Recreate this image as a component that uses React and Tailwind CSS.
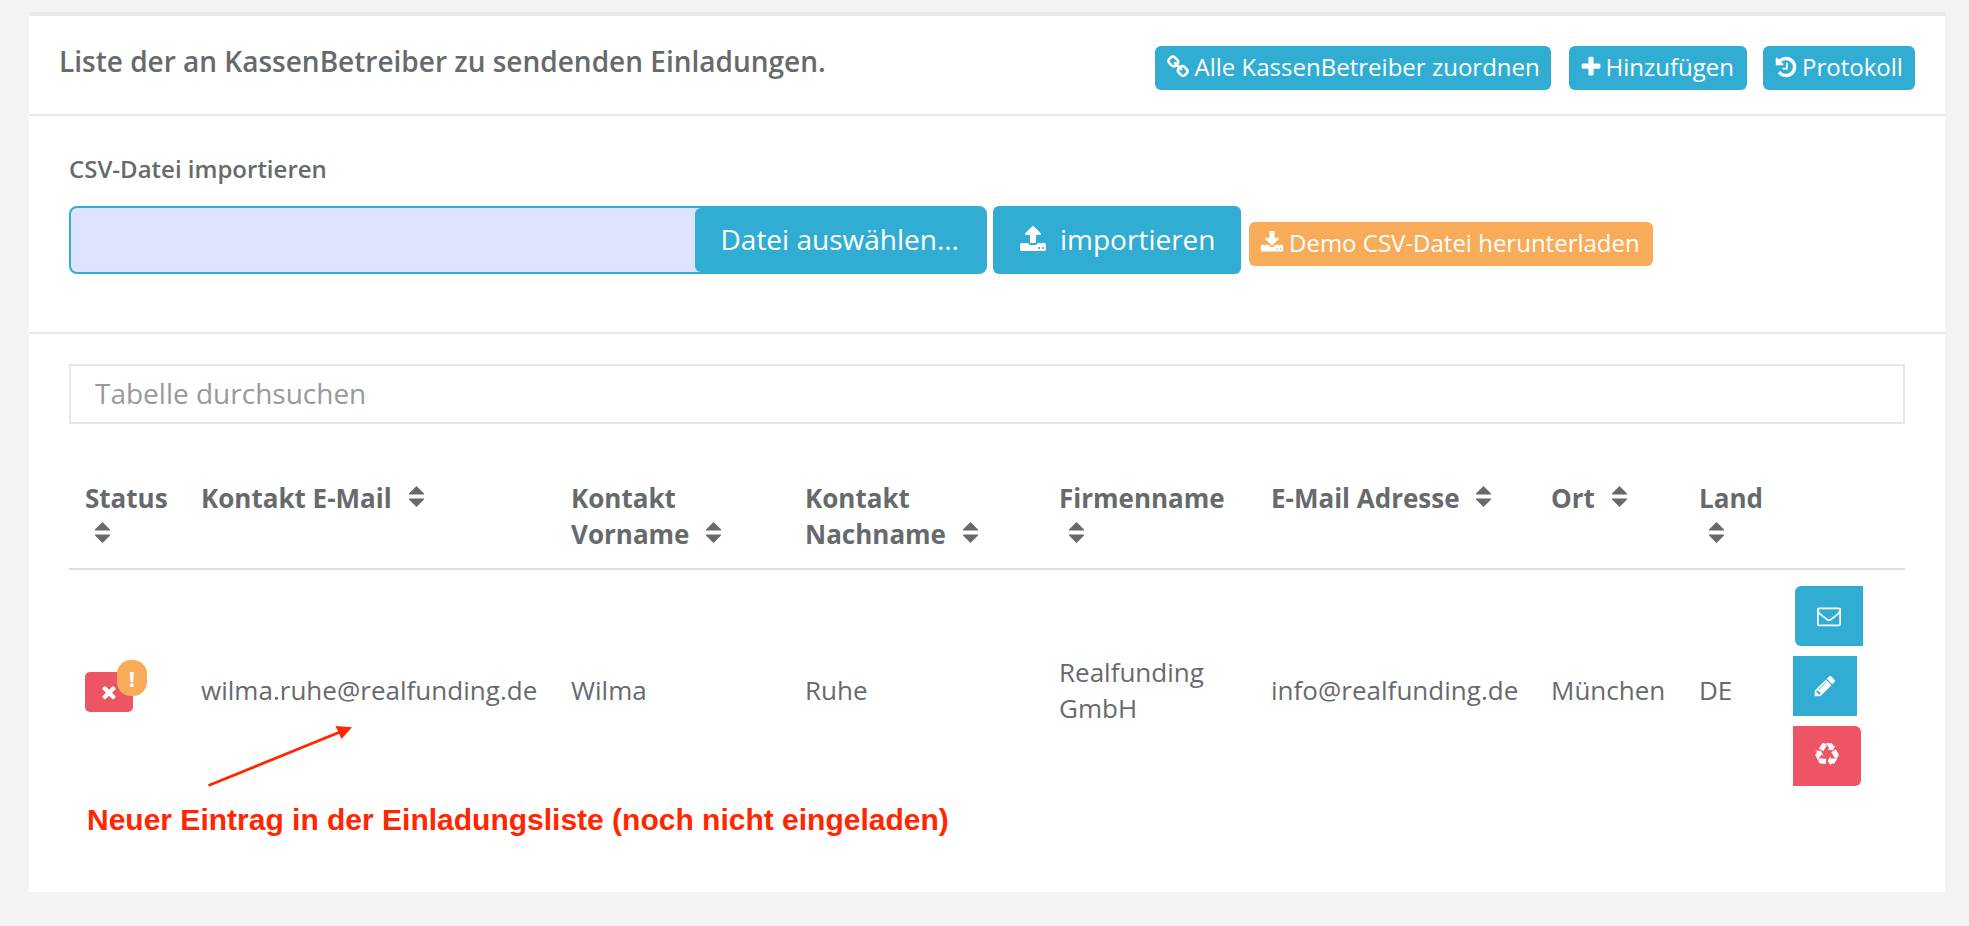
const PATHS = {
  link: "M1520 1216q0-40-28-68l-208-208q-28-28-68-28-42 0-72 32 3 3 19 18.5t21.5 21.5 15 19 13 25.5 3.5 27.5q0 40-28 68t-68 28q-15 0-27.5-3.5t-25.5-13-19-15-21.5-21.5-18.5-19q-33 31-33 73 0 40 28 68l206 207q27 27 68 27 40 0 68-26l147-146q28-28 28-67zm-703-705q0-40-28-68l-206-207q-28-28-68-28-39 0-68 27l-147 146q-28 28-28 67 0 40 28 68l208 208q27 27 68 27 42 0 72-31-3-3-19-18.5t-21.5-21.5-15-19-13-25.5-3.5-27.5q0-40 28-68t68-28q15 0 27.5 3.5t25.5 13 19 15 21.5 21.5 18.5 19q33-31 33-73zm895 705q0 120-85 203l-147 146q-83 83-203 83-121 0-204-85l-206-207q-83-83-83-203 0-123 88-209l-88-88q-86 88-208 88-120 0-204-84l-208-208q-84-84-84-204t85-203l147-146q83-83 203-83 121 0 204 85l206 207q83 83 83 203 0 123-88 209l88 88q86-88 208-88 120 0 204 84l208 208q84 84 84 204z",
  plus: "M1600 736v192q0 40-28 68t-68 28h-416v416q0 40-28 68t-68 28h-192q-40 0-68-28t-28-68v-416h-416q-40 0-68-28t-28-68v-192q0-40 28-68t68-28h416v-416q0-40 28-68t68-28h192q40 0 68 28t28 68v416h416q40 0 68 28t28 68z",
  history: "M1664 896q0 156-61 298t-164 245-245 164-298 61q-172 0-327-72.5t-264-204.5q-7-10-6.5-22.5t8.5-20.5l137-138q10-9 25-9 16 2 23 12 73 95 179 147t225 52q104 0 198.5-40.5t163.5-109.5 109.5-163.5 40.5-198.5-40.5-198.5-109.5-163.5-163.5-109.5-198.5-40.5q-98 0-188 35.5t-160 101.5l137 138q31 30 14 69-17 40-59 40h-448q-26 0-45-19t-19-45v-448q0-42 40-59 39-17 69 14l130 129q107-101 244.5-156.5t284.5-55.5q156 0 298 61t245 164 164 245 61 298zm-640-288v448q0 14-9 23t-23 9h-320q-14 0-23-9t-9-23v-64q0-14 9-23t23-9h224v-352q0-14 9-23t23-9h64q14 0 23 9t9 23z",
  upload: "M1344 1472q0-26-19-45t-45-19-45 19-19 45 19 45 45 19 45-19 19-45zm256 0q0-26-19-45t-45-19-45 19-19 45 19 45 45 19 45-19 19-45zm128-224v320q0 40-28 68t-68 28h-1472q-40 0-68-28t-28-68v-320q0-40 28-68t68-28h427q21 56 70.5 92t110.5 36h256q61 0 110.5-36t70.5-92h427q40 0 68 28t28 68zm-325-648q-17 40-59 40h-256v448q0 26-19 45t-45 19h-256q-26 0-45-19t-19-45v-448h-256q-42 0-59-40-17-39 14-69l448-448q18-19 45-19t45 19l448 448q31 30 14 69z",
  download: "M1344 1344q0-26-19-45t-45-19-45 19-19 45 19 45 45 19 45-19 19-45zm256 0q0-26-19-45t-45-19-45 19-19 45 19 45 45 19 45-19 19-45zm128-224v320q0 40-28 68t-68 28h-1472q-40 0-68-28t-28-68v-320q0-40 28-68t68-28h465l135 136q58 56 136 56t136-56l136-136h464q40 0 68 28t28 68zm-325-569q17 41-14 70l-448 448q-18 19-45 19t-45-19l-448-448q-31-29-14-70 17-39 59-39h256v-448q0-26 19-45t45-19h256q26 0 45 19t19 45v448h256q42 0 59 39z",
  times: "M1490 1322q0 40-28 68l-136 136q-28 28-68 28t-68-28l-294-294-294 294q-28 28-68 28t-68-28l-136-136q-28-28-28-68t28-68l294-294-294-294q-28-28-28-68t28-68l136-136q28-28 68-28t68 28l294 294 294-294q28-28 68-28t68 28l136 136q28 28 28 68t-28 68l-294 294 294 294q28 28 28 68z",
  envelope: "M1664 1504v-768q-32 36-69 66-268 206-426 338-51 43-83 67t-86.5 48.5-102.5 24.5h-2q-48 0-102.5-24.5t-86.5-48.5-83-67q-158-132-426-338-37-30-69-66v768q0 13 9.5 22.5t22.5 9.5h1472q13 0 22.5-9.5t9.5-22.5zm0-1051v-24.5l-.5-13-3-12.5-5.5-9-9-7.5-14-2.5h-1472q-13 0-22.5 9.5t-9.5 22.5q0 168 147 284 193 152 401 317 6 5 35 29.5t46 37.5 44.5 31.5 50.5 27.5 43 9h2q20 0 43-9t50.5-27.5 44.5-31.5 46-37.5 35-29.5q208-165 401-317 54-43 100.5-115.5t46.5-131.5zm128-37v1088q0 66-47 113t-113 47h-1472q-66 0-113-47t-47-113v-1088q0-66 47-113t113-47h1472q66 0 113 47t47 113z",
  pencil: "M491 1536l91-91-235-235-91 91v107h128v128h107zm523-928q0-22-22-22-10 0-17 7l-542 542q-7 7-7 17 0 22 22 22 10 0 17-7l542-542q7-7 7-17zm-54-192l416 416-832 832h-416v-416zm683 96q0 53-37 90l-166 166-416-416 166-165q36-38 90-38 53 0 91 38l235 234q37 39 37 91z",
  recycle: "M836 1169l-15 368-2 22-420-29q-36-3-67-31.5t-47-65.5q-11-27-14.5-55t4-65 12-55 21.5-64 19-53q78 12 509 28zm-387-586l180 379-147-92q-63 72-111.5 144.5t-72.5 125-39.5 94.5-18.5 63l-4 21-190-357q-17-26-18-56t6-47l8-18q35-63 114-188l-140-86zm1231 517l-188 359q-12 29-36.5 46.5t-43.5 20.5l-18 4q-71 7-219 12l8 164-230-367 211-362 7 173q170 16 283 5t170-33zm-785-924q-47 63-265 435l-317-187-19-12 225-356q20-31 60-45t80-10q24 2 48.5 12t42 21 41.5 33 36 34.5 36 39.5 32 35zm655 307l212 363q18 37 12.5 76t-27.5 74q-13 20-33 37t-38 28-48.5 22-47 16-51.5 14-46 12q-34-72-265-436l313-195zm-143-226l142-83-220 373-419-20 151-86q-34-89-75-166t-75.5-123.5-64.5-80-47-46.5l-17-13 405 1q31-3 58 10.5t39 28.5l11 15q39 61 112 190z",
};

function Icon({ name, className = "size-6" }) {
  return (
    <svg viewBox="0 0 1792 1792" fill="currentColor" aria-hidden="true" className={`shrink-0 overflow-visible ${className}`}>
      <path d={PATHS[name]} />
    </svg>
  );
}

function Sorter({ className }) {
  return (
    <svg viewBox="0 0 15 21" fill="currentColor" aria-hidden="true" className={`inline-block h-[21px] w-[15px] align-[1px] ${className}`}>
      <path d="M7.5 0 15 7.5V8.6H0V7.5zM0 12.4H15V13.5L7.5 21 0 13.5z" />
    </svg>
  );
}

function SmallButton({ icon, className, children }) {
  return (
    <button className={`flex h-11 items-center rounded-md pb-[2px] text-2xl leading-none whitespace-nowrap text-white ${className}`}>
      <Icon name={icon} />
      {children}
    </button>
  );
}

const COLS = "grid grid-cols-[116px_370px_234px_254px_212px_280px_148px_95px_127px]";

export default function App() {
  return (
    <div className="h-[926px] w-[1969px] overflow-hidden bg-[#f3f3f3] pt-3 pl-[29px] font-['Open_Sans',sans-serif] text-[#676a6c]">
      <div className="relative h-[880px] w-[1916px] border-t-4 border-[#e7eaec] bg-white">
        <header className="flex h-[100px] items-start justify-between border-b-2 border-[#e7eaec] pr-[30px] pl-[30px]">
          <h5 className="mt-[26px] text-[28px] leading-[38px] font-semibold whitespace-nowrap">
            Liste der an KassenBetreiber zu sendenden Einladungen.
          </h5>
          <div className="mt-[30px] flex">
            <SmallButton icon="link" className="w-[396px] gap-[5px] bg-[#31add3] pl-[10.5px] tracking-[0.01px]">Alle KassenBetreiber zuordnen</SmallButton>
            <SmallButton icon="plus" className="ml-[18px] w-[178px] gap-[3px] bg-[#31add3] pl-[9.5px]">Hinzufügen</SmallButton>
            <SmallButton icon="history" className="ml-4 w-[152px] gap-[4.5px] bg-[#31add3] pl-[10.5px]">Protokoll</SmallButton>
          </div>
        </header>

        <section className="h-[218px] border-b-2 border-[#e7eaec] px-10 pt-[37px]">
          <label className="block h-[53px] text-2xl leading-8 font-semibold">CSV-Datei importieren</label>
          <div className="flex">
            <div className="flex h-[68px] w-[918px] justify-end rounded-lg border-2 border-[#31add3] bg-[#dde4fe]">
              <button className="-mr-px h-16 w-[291px] rounded-md bg-[#31add3] pb-[2px] pl-[25.5px] text-left text-[28px] whitespace-nowrap text-white">
                Datei auswählen...
              </button>
            </div>
            <button className="ml-[6px] flex h-[68px] w-[248px] items-center gap-[13px] rounded-md bg-[#31add3] pb-[2px] pl-[26px] text-[28px] whitespace-nowrap text-white">
              <Icon name="upload" className="size-7" />
              importieren
            </button>
            <SmallButton icon="download" className="mt-4 ml-2 w-[404px] gap-[5px] bg-[#f8ac59] pl-[11px]">Demo CSV-Datei herunterladen</SmallButton>
          </div>
        </section>

        <section className="px-10 pt-[30px]">
          <input
            className="block h-[60px] w-full border-2 border-[#e5e6e7] px-6 pb-[2px] text-[28px] outline-none placeholder:text-[#999]"
            placeholder="Tabelle durchsuchen"
          />
          <div className="mt-[39px] text-[26px] leading-9">
            <div className={`${COLS} h-[107px] border-b-2 border-[#ddd] pt-[17px] font-bold whitespace-nowrap *:pl-4`}>
              <div>Status<br /><Sorter className="ml-[10px]" /></div>
              <div>Kontakt E-Mail<Sorter className="ml-[17px]" /></div>
              <div>Kontakt<br />Vorname<Sorter className="ml-4" /></div>
              <div>Kontakt<br />Nachname<Sorter className="ml-[17px]" /></div>
              <div>Firmenname<br /><Sorter className="ml-[10px]" /></div>
              <div>E-Mail Adresse<Sorter className="ml-4" /></div>
              <div>Ort<Sorter className="ml-[17px]" /></div>
              <div>Land<br /><Sorter className="ml-[10px]" /></div>
              <div />
            </div>
            <div className={`${COLS} h-60 items-center whitespace-nowrap *:pl-4`}>
              <div>
                <div className="relative top-[2px] flex h-10 w-12 items-center justify-center rounded-[5px] bg-[#ed5565] text-white">
                  <Icon name="times" className="size-[20px]" />
                  <span className="absolute -top-3 left-8 flex h-9 w-[30px] items-center justify-center rounded-[14px] bg-[#f8ac59] pb-px text-[22px] leading-none font-bold">!</span>
                </div>
              </div>
              <div className="tracking-[0.02px]">wilma.ruhe@realfunding.de</div>
              <div>Wilma</div>
              <div>Ruhe</div>
              <div>Realfunding<br />GmbH</div>
              <div className="tracking-[0.02px]">info@realfunding.de</div>
              <div>München</div>
              <div>DE</div>
              <div className="-ml-px flex flex-col gap-[10px] self-start pt-4 text-white">
                <button className="ml-[2px] flex h-[60px] w-[68px] items-center justify-center rounded-l-md bg-[#31add3]"><Icon name="envelope" /></button>
                <button className="flex h-[60px] w-16 items-center justify-center bg-[#31add3] pb-px"><Icon name="pencil" /></button>
                <button className="flex h-[60px] w-[68px] items-center justify-center rounded-r-md bg-[#ed5565] pr-[1px] pb-[2px]"><Icon name="recycle" /></button>
              </div>
            </div>
          </div>
        </section>

        <svg viewBox="0 0 160 70" className="absolute top-[704px] left-[171px] h-[70px] w-[160px]" aria-hidden="true">
          <path d="M8.5 65.5 140 12" stroke="#ff2600" strokeWidth="2.8" />
          <path d="M135.5 6 152 7.2 141.5 19z" fill="#ff2600" />
        </svg>
        <p className="absolute top-[786px] left-[58px] font-['Liberation_Sans',sans-serif] text-[30px] leading-9 font-bold whitespace-nowrap text-[#ff2600]">
          Neuer Eintrag in der Einladungsliste (noch nicht eingeladen)
        </p>
      </div>
    </div>
  );
}
